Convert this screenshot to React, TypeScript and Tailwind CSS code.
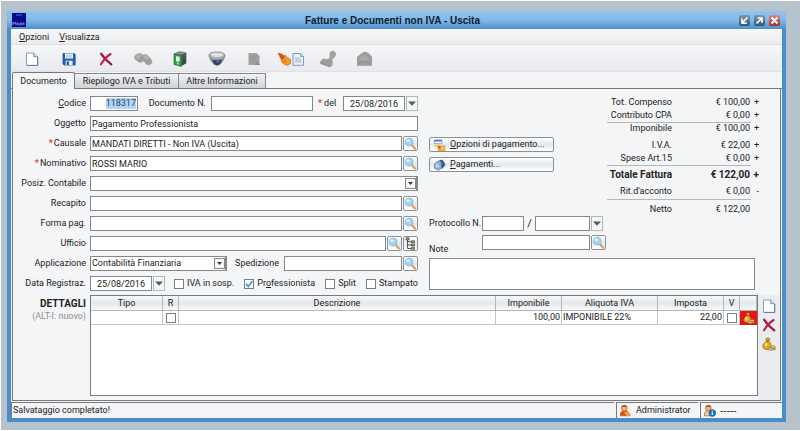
import React from 'react';

interface IconProps {
  className?: string;
}

const inputClass = 'h-[15px] min-w-0 border border-[#85888b] bg-white px-px text-[#222] outline-none';
const buttonClass =
  'flex h-[15px] items-center rounded-xs border border-[#8d9093] bg-linear-to-b from-white via-[#e4e8ee] to-white';

/* ---------- Icons ---------- */

const PageIcon = ({ className = 'size-[14px]' }: IconProps) => (
  <svg viewBox="0 0 14 14" className={className}>
    <path d="M1.5 1h7.3l3.7 3.7V13.3h-11z" fill="#fff" stroke="#7d97b4" strokeWidth="0.9" />
    <path d="M8.8 1v3.7h3.7" fill="#dbe8f5" stroke="#6384a6" strokeWidth="0.9" />
    <path d="M12.8 5v8.6H2" fill="none" stroke="#4d6d94" strokeWidth="0.8" />
  </svg>
);

const SaveIcon = ({ className = 'size-[14px]' }: IconProps) => (
  <svg viewBox="0 0 14 14" className={className}>
    <path d="M1 1.5h11.2l1 1V13H2l-1-1z" fill="#1f62b5" stroke="#174a8d" strokeWidth="0.7" />
    <path d="M3 1.5h8v5H3z" fill="#f1f7fd" />
    <path d="M4 3.2h6M4 4.9h6" stroke="#93add0" strokeWidth="0.8" />
    <path d="M3.6 8.7h7V13h-7z" fill="#e6eef6" />
    <path d="M4.8 9.5h2V13h-2z" fill="#174a8d" />
  </svg>
);

const DeleteIcon = ({ className = 'size-[14px]' }: IconProps) => (
  <svg viewBox="0 0 14 14" className={className}>
    <path d="M2.2 1.8C4 4.6 8.4 9.4 12.3 12.4" stroke="#a31436" strokeWidth="2.3" strokeLinecap="round" fill="none" />
    <path d="M11.6 2C8.2 4 4.3 8.5 2 12.3" stroke="#bd2348" strokeWidth="2.1" strokeLinecap="round" fill="none" />
  </svg>
);

const BinocularsIcon = () => (
  <svg viewBox="0 0 20 14" className="h-[14px] w-5">
    <path d="M1 4.5 3 2.2 6.5 1l4.2 1.7L13 2l4 3.5 2.5 3.8-.5 2.2-2.8 1.7-3-.8-2.4-3.2-2.6 1.6-2.7-.5L1.6 7z" fill="#a3a3a3" />
    <path d="M2 4.5c2-2 4.5-2.2 6.5-1l-3 3.4zM10.5 4.2l2.5-1 3 3-2.5 1.5z" fill="#b4b4b4" />
    <path d="m5.5 9.5 4.2-4.3M12.8 11.5l4-3.6" stroke="#8b8b8b" strokeWidth="1" fill="none" />
  </svg>
);

const BinderIcon = () => (
  <svg viewBox="0 0 14 16" className="h-4 w-[14px]">
    <path d="M1 3 6.5.6 13.2 2 8.6 4.3z" fill="#8f9592" stroke="#4d554f" strokeWidth="0.6" />
    <path d="m8.3 4 5-2v10.3l-5 3z" fill="#414a44" />
    <path d="m9.8 5 2.5-1M9.8 7l2.5-1" stroke="#78817b" strokeWidth="0.7" />
    <path d="m1 3 7.3 1.2v11.2L1 13.5z" fill="#31a046" stroke="#1e6a30" strokeWidth="0.7" />
    <path d="m3 5.2 3.6.6v5l-3.6-.6z" fill="#e6f6e6" />
    <circle cx="4.8" cy="12.5" r="0.9" fill="#cdebcf" />
  </svg>
);

const CameraIcon = () => (
  <svg viewBox="0 0 18 16" className="h-4 w-[18px]">
    <path d="M1 5.5h16l-1.3 3.7-3 4c-2 1.8-5.4 1.8-7.4 0l-3-4z" fill="#8b8e92" />
    <path d="M4.5 8.5h9.3c-.2 3-2.3 5.8-4.6 5.8s-4.5-2.8-4.7-5.8z" fill="#35404f" />
    <path d="M.9 4.5C1.5 1.7 4.5 1 9 1s7.5.7 8.1 3.5c-.2 3-3.5 4.5-8.1 4.5S1.1 7.5.9 4.5z" fill="#a9acb0" stroke="#7a7d81" strokeWidth="0.7" />
    <path d="M2.5 3.8C3.5 2 6 1.8 9 1.8s5.5.2 6.5 2c-1 1.7-3.5 2.3-6.5 2.3s-5.500-.6-6.500-2.300z" fill="#dedfe1" />
    <circle cx="10.2" cy="10.8" r="2" fill="#2c4a94" />
    <circle cx="9.7" cy="10.3" r="0.8" fill="#93b0e3" />
  </svg>
);

const DisabledPageIcon = () => (
  <svg viewBox="0 0 14 14" className="size-[14px]">
    <path d="M1.5 1h8L12.5 4v9h-11z" fill="#a0a0a0" />
    <path d="M3.5 4.5h4M3.5 6.7h6M3.5 9h4" stroke="#949494" strokeWidth="0.9" />
    <path d="m9.5 9.5 3.5 3.5H8z" fill="#8d8d8d" />
  </svg>
);

const HandPageIcon = () => (
  <svg viewBox="0 0 28 14" className="h-[14px] w-7">
    <path d="m1.2 1.2 3.8 1 2.5 2.5L8 2.8l1.8 2.4 3.7 2.3v4L10.8 13.3 6.5 12l-1.8-2.3L4 7z" fill="#f39a2c" stroke="#c9601a" strokeWidth="0.7" />
    <path d="m1.2 1.2 3.8 1 2.8 3L5 8z" fill="#c8501c" />
    <path d="m7 7.5 2.5 2M6.3 9.2l2.5 1.6" stroke="#c9601a" strokeWidth="0.7" />
    <path d="M16 1.5h7.5L26.5 4.5v8.8H16z" fill="#eef4fc" stroke="#6f8dbb" strokeWidth="0.9" />
    <path d="M23.5 1.5v3h3" fill="#bfd2ea" stroke="#5f82b5" strokeWidth="0.7" />
    <path d="M18 6h5M18 8h6.5M18 10h6.5" stroke="#8aa6cf" strokeWidth="0.9" />
  </svg>
);

const StampIcon = () => (
  <svg viewBox="0 0 18 18" className="size-[18px]">
    <path d="M10.5 4C10.5 2 12 .8 13.8.8s3.2 1.3 3.2 3.2-1 3-2.4 4.2c-1.2 1-1.7 2-1.4 3.5l-3.700-2.200c1.800-2 1-3.500 1-5.500z" fill="#a3a3a3" />
    <path d="M1 12.3c0-1 2.5-3.5 4-3.8l2.5.8 2-.8 4 2.3.2 3.5c-.4 1.5-1.6 2.8-3 2.9L1.5 14z" fill="#9d9d9d" />
    <path d="m1.5 13 9.2 3.3" stroke="#8a8a8a" strokeWidth="0.9" />
  </svg>
);

const MailIcon = () => (
  <svg viewBox="0 0 17 16" className="h-4 w-[17px]">
    <path d="M1 6 5.5 2.2 8 .8h2l3 1.7L16 6v8.7H1z" fill="#9d9d9d" />
    <path d="m3.5 7 4-3 5.5 3.5v2l-5 1.5-4.5-2z" fill="#aaa" />
    <path d="m1.5 14 5.5-4 2 1.3L11 10l4.5 4" fill="none" stroke="#8b8b8b" strokeWidth="0.8" />
  </svg>
);

const SearchIcon = () => (
  <svg viewBox="0 0 13 13" className="size-[13px]">
    <path d="m7.8 8 3.2 3.5" stroke="#e2a064" strokeWidth="2.4" strokeLinecap="round" />
    <circle cx="5.2" cy="5" r="3.9" fill="#a5d4f2" stroke="#7fb9df" strokeWidth="0.8" />
    <ellipse cx="4" cy="3.7" rx="1.8" ry="1.3" fill="#e4f4fd" />
  </svg>
);

const TreeIcon = () => (
  <svg viewBox="0 0 13 13" className="size-[13px]">
    <path d="M3.5 2v9.5h4M3.5 4.7h4M3.5 8h4" stroke="#444" strokeWidth="0.9" fill="none" />
    <path d="M2 .8h3v2.2H2zM7.5 3.8h3v1.9h-3zM7.5 7.1h3V9h-3zM7.5 10.4h3v1.9h-3z" fill="#a3a97f" stroke="#3c4230" strokeWidth="0.7" />
  </svg>
);

const OptionsIcon = () => (
  <svg viewBox="0 0 13 13" className="h-3 w-[13px]">
    <path d="M1 1h8v4H1z" fill="#fff" stroke="#5b86c2" strokeWidth="0.7" />
    <path d="M1 1h8v1.7H1z" fill="#477bc0" />
    <path d="M1 6h6v2.5H1z" fill="#f7d154" />
    <path d="M5 7.5h7.5v5H5z" fill="#f8c23f" stroke="#c98a25" strokeWidth="0.7" />
    <path d="m4.5 9 3-2v4z" fill="#d64c26" />
  </svg>
);

const PaymentsIcon = () => (
  <svg viewBox="0 0 13 13" className="h-3 w-[13px]">
    <path d="M1 5.5 5.5 2l3 1.5V10l-3 2.3L1 10z" fill="#8eb2d6" stroke="#446f9f" strokeWidth="0.7" />
    <path d="M6 1.2 9.5.8l1.7 2L13 6.5 10.5 9.5 8.5 11V4z" fill="#3d618c" />
    <path d="m2.5 6.5 2.5-.7M2.5 8.5l3.5-.7" stroke="#eef6fc" strokeWidth="1" />
  </svg>
);

const CoinsIcon = ({ className = 'size-[14px]' }: IconProps) => (
  <svg viewBox="0 0 14 14" className={className}>
    <path d="M4 1.5 6.5 1 8 2.2 6.7 4.2C9 6 9.5 8 8.8 11L6 12.7 2 11.8.8 9.5C1 7 2.4 5.5 4.6 4z" fill="#e3ab24" stroke="#89610f" strokeWidth="0.7" />
    <path d="M4.5 4.2h2.3" stroke="#724f0e" strokeWidth="0.9" />
    <ellipse cx="4" cy="7.5" rx="1.2" ry="1.7" fill="#fbe48c" />
    <ellipse cx="10.8" cy="10" rx="2.6" ry="1.3" fill="#f2d367" stroke="#89610f" strokeWidth="0.6" />
    <ellipse cx="8.5" cy="12.2" rx="2.4" ry="1.2" fill="#d3d0bc" stroke="#77694c" strokeWidth="0.6" />
    <ellipse cx="12" cy="12" rx="1.6" ry="1" fill="#d9b53f" stroke="#89610f" strokeWidth="0.5" />
  </svg>
);

const UserIcon = ({ info = false }: { info?: boolean }) => (
  <svg viewBox="0 0 13 13" className="size-[13px]">
    <path d="M1.5 11.8c-.6-2.8.8-4.9 3.7-5.1 3.2-.2 5.3 1.9 6 5.1z" fill={info ? '#ead0ad' : '#dd4d21'} stroke="#b0562a" strokeWidth="0.7" />
    <circle cx="5.3" cy="4" r="2.9" fill="#f3b467" stroke="#a9682f" strokeWidth="0.7" />
    <path d="M2.7 3.3C3.2.7 7.4.6 8 3.1 6 3.3 5 2.5 2.7 3.3z" fill="#a65f27" />
    {info ? (
      <>
        <circle cx="9.3" cy="9" r="3.4" fill="#2277c9" stroke="#0d4a93" strokeWidth="0.5" />
        <path d="M9.3 8.3v2.7M9.3 6.5v1" stroke="#fff" strokeWidth="1.1" />
      </>
    ) : (
      <path d="m5 8 2.5 3.8h4.2c0-1.8-1-3-3-4z" fill="#f5a64b" />
    )}
  </svg>
);

const Chevron = () => (
  <svg viewBox="0 0 8 5" className="h-[5px] w-2">
    <path d="M0 .5h8L4 4.8z" fill="#555a5a" />
  </svg>
);

/* ---------- Controls ---------- */

const SearchButton = ({ label }: { label: string }) => (
  <button type="button" aria-label={label} className={`${buttonClass} w-[15px] shrink-0`}>
    <SearchIcon />
  </button>
);

const DropButton = ({ label }: { label: string }) => (
  <button type="button" aria-label={label} className="flex h-[15px] w-3 shrink-0 items-center justify-center border border-[#b4b7ba] bg-[#f5f6f8]">
    <Chevron />
  </button>
);

interface SelectFieldProps {
  id: string;
  options: string[];
  className?: string;
}

const SelectField = ({ id, options, className = '' }: SelectFieldProps) => (
  <div className={`relative flex ${className}`}>
    <select id={id} className={`${inputClass} w-full appearance-none border-r-2`}>
      {options.map((option) => (
        <option key={option}>{option}</option>
      ))}
    </select>
    <span className="pointer-events-none absolute top-[2px] right-[2px] flex h-[11px] w-[11px] items-center justify-center border border-[#85888b] bg-[#f5f6f8]">
      <svg viewBox="0 0 8 5" className="h-[3px] w-[5px]">
        <path d="M0 0h8L4 5z" fill="#333" />
      </svg>
    </span>
  </div>
);

interface CheckFieldProps {
  label: React.ReactNode;
  checked?: boolean;
}

const CheckField = ({ label, checked = false }: CheckFieldProps) => (
  <label className="flex items-center gap-[3px] whitespace-nowrap">
    <span className="relative flex">
      <input type="checkbox" defaultChecked={checked} className="peer size-[10px] appearance-none border border-[#7b7e81] bg-white" />
      <svg viewBox="0 0 10 10" className="pointer-events-none absolute inset-0 hidden size-[10px] peer-checked:block">
        <path d="m2 4.8 2.3 2.7L8.4 2" stroke="#4a9bda" strokeWidth="1.8" fill="none" />
      </svg>
    </span>
    {label}
  </label>
);

interface FormRowProps {
  id: string;
  label: React.ReactNode;
  required?: boolean;
  children: React.ReactNode;
}

const FormRow = ({ id, label, required = false, children }: FormRowProps) => (
  <div className="flex items-center gap-1">
    <label htmlFor={id} className="w-[73px] shrink-0 text-right whitespace-nowrap">
      {required && <span className="mr-px font-bold text-[#e33]">*</span>}
      {label}
    </label>
    <div className="flex min-w-0 flex-1 items-center gap-px">{children}</div>
  </div>
);

const toolbar = [
  { name: 'Nuovo', icon: <PageIcon /> },
  { name: 'Salva', icon: <SaveIcon /> },
  { name: 'Elimina', icon: <DeleteIcon /> },
  { name: 'Cerca', icon: <BinocularsIcon /> },
  { name: 'Archivio', icon: <BinderIcon /> },
  { name: 'Anteprima', icon: <CameraIcon /> },
  { name: 'Documento', icon: <DisabledPageIcon /> },
  { name: 'Seleziona', icon: <HandPageIcon /> },
  { name: 'Timbro', icon: <StampIcon /> },
  { name: 'Invia', icon: <MailIcon /> }
];

const totals = [
  { label: 'Tot. Compenso', value: '€ 100,00', sign: '+', style: 'h-[13px]' },
  { label: 'Contributo CPA', value: '€ 0,00', sign: '+', style: 'h-[13px]' },
  { label: 'Imponibile', value: '€ 100,00', sign: '+', style: 'h-[13px]', line: true },
  { label: 'I.V.A.', value: '€ 22,00', sign: '+', style: 'mt-1 h-[13px]' },
  { label: 'Spese Art.15', value: '€ 0,00', sign: '+', style: 'h-[13px]' },
  { label: 'Totale Fattura', value: '€ 122,00', sign: '+', style: 'h-[18px] text-[10px] font-bold', line: true },
  { label: "Rit.d'acconto", value: '€ 0,00', sign: '-', style: 'h-4' },
  { label: 'Netto', value: '€ 122,00', sign: '', style: 'h-5', line: true }
];

const Titlebar = () => (
  <header className="flex h-[18px] items-center rounded-t-sm bg-linear-to-b from-[#8fc5f3] via-[#83b9e8] to-[#4d8fcc] pr-[6px] pl-[5px]">
    <span className="flex size-[14px] items-end justify-center bg-[#08088c]">
      <svg viewBox="0 0 14 14" className="size-[14px]">
        <path d="M4 2h6" stroke="#7183cf" strokeWidth="0.8" />
        <path d="M1 12V9l1.5 2L4 9v3M5 12l1-2 1 2M8 13v-3h1.5v2M11 12v-2h1v2" stroke="#a9b5ef" strokeWidth="0.7" fill="none" />
      </svg>
    </span>
    <h1 className="flex-1 pl-5 text-center font-['Liberation_Sans',sans-serif] text-[10px] font-bold text-[#0b1b2c]">
      Fatture e Documenti non IVA - Uscita
    </h1>
    <div className="flex gap-1">
      <button type="button" aria-label="Riduci" className="size-[11px] rounded-xs bg-linear-to-b from-[#8199ad] to-[#2d5674]">
        <svg viewBox="0 0 11 11"><path d="M8.5 2.5 3.5 7.5M3 3.5v4.7h4.7" stroke="#fff" strokeWidth="1.7" fill="none" /></svg>
      </button>
      <button type="button" aria-label="Ingrandisci" className="size-[11px] rounded-xs bg-linear-to-b from-[#8199ad] to-[#2d5674]">
        <svg viewBox="0 0 11 11"><path d="m2.5 8.5 5-5M3.5 3H8v4.7" stroke="#fff" strokeWidth="1.7" fill="none" /></svg>
      </button>
      <button type="button" aria-label="Chiudi" className="size-[11px] rounded-xs bg-linear-to-b from-[#d98a83] to-[#a32c26]">
        <svg viewBox="0 0 11 11"><path d="m2.5 2.5 6 6m0-6-6 6" stroke="#fff" strokeWidth="1.8" /></svg>
      </button>
    </div>
  </header>
);

const DocumentForm = () => (
  <form className="flex w-[405px] shrink-0 flex-col gap-[5px]">
    <FormRow id="codice" label={<><u>C</u>odice</>}>
      <div className={`${inputClass} flex w-12 items-center justify-end`}>
        <input id="codice" defaultValue="118317" className="field-sizing-content h-[11px] bg-[#b3d5f2] text-right text-[#17466f] outline-none" />
      </div>
      <label htmlFor="numero" className="flex-1 pr-1 text-right whitespace-nowrap">Documento N.</label>
      <input id="numero" className={`${inputClass} w-[102px]`} />
      <label htmlFor="data" className="w-7 pl-1 whitespace-nowrap">
        <span className="mr-[2px] font-bold text-[#e33]">*</span>del
      </label>
      <input id="data" defaultValue="25/08/2016" className={`${inputClass} w-[62px] text-center`} />
      <DropButton label="Scegli data" />
    </FormRow>
    <FormRow id="oggetto" label="Oggetto">
      <input id="oggetto" defaultValue="Pagamento Professionista" className={`${inputClass} flex-1`} />
    </FormRow>
    <FormRow id="causale" label="Causale" required>
      <input id="causale" defaultValue="MANDATI DIRETTI - Non IVA (Uscita)" className={`${inputClass} flex-1`} />
      <SearchButton label="Cerca causale" />
    </FormRow>
    <FormRow id="nominativo" label="Nominativo" required>
      <input id="nominativo" defaultValue="ROSSI MARIO" className={`${inputClass} flex-1`} />
      <SearchButton label="Cerca nominativo" />
    </FormRow>
    <FormRow id="posizione" label="Posiz. Contabile">
      <SelectField id="posizione" options={['']} className="flex-1" />
    </FormRow>
    <FormRow id="recapito" label="Recapito">
      <input id="recapito" className={`${inputClass} flex-1`} />
      <SearchButton label="Cerca recapito" />
    </FormRow>
    <FormRow id="forma" label="Forma pag.">
      <input id="forma" className={`${inputClass} flex-1`} />
      <SearchButton label="Cerca forma di pagamento" />
    </FormRow>
    <FormRow id="ufficio" label="Ufficio">
      <input id="ufficio" className={`${inputClass} flex-1`} />
      <SearchButton label="Cerca ufficio" />
      <button type="button" aria-label="Albero uffici" className={`${buttonClass} w-[15px] shrink-0`}>
        <TreeIcon />
      </button>
    </FormRow>
    <FormRow id="applicazione" label="Applicazione">
      <SelectField id="applicazione" options={['Contabilità Finanziaria']} className="w-[137px]" />
      <label htmlFor="spedizione" className="flex-1 pr-1 text-right">Spedizione</label>
      <input id="spedizione" className={`${inputClass} w-[118px]`} />
      <SearchButton label="Cerca spedizione" />
    </FormRow>
    <FormRow id="registrazione" label="Data Registraz.">
      <input id="registrazione" defaultValue="25/08/2016" className={`${inputClass} w-[62px] text-center`} />
      <DropButton label="Scegli data di registrazione" />
      <div className="flex flex-1 justify-between pl-2">
        <CheckField label="IVA in sosp." />
        <CheckField label={<span>Pr<u>o</u>fessionista</span>} checked />
        <CheckField label="Split" />
        <CheckField label="Stampato" />
      </div>
    </FormRow>
  </form>
);

const PaymentPanel = () => (
  <section className="flex min-w-0 flex-1 flex-col">
    <div className="flex h-[120px] justify-between">
      <div className="flex flex-col gap-[5px] pt-[41px]">
        <button type="button" className={`${buttonClass} w-[125px] gap-1 pl-[3px] whitespace-nowrap`}>
          <OptionsIcon />
          <span><u>O</u>pzioni di pagamento...</span>
        </button>
        <button type="button" className={`${buttonClass} w-[125px] gap-1 pl-[3px] whitespace-nowrap`}>
          <PaymentsIcon />
          <span><u>P</u>agamenti...</span>
        </button>
      </div>
      <dl className="w-[156px]">
        {totals.map((row) => (
          <div key={row.label} className={`relative flex items-center ${row.style}`}>
            {row.line && <span className="absolute top-0 right-2 left-1 h-px bg-[#b5b8bb]" />}
            <dt className="w-[69px] text-right whitespace-nowrap">{row.label}</dt>
            <dd className="flex-1 text-right">{row.value}</dd>
            <dd className="w-[9px] text-right">{row.sign}</dd>
          </div>
        ))}
      </dl>
    </div>
    <div className="flex items-center">
      <label htmlFor="protocollo" className="w-[53px] whitespace-nowrap">Protocollo N.</label>
      <input id="protocollo" className={`${inputClass} w-[42px]`} />
      <span className="w-[11px] text-center text-[11px]">/</span>
      <input aria-label="Anno protocollo" className={`${inputClass} mr-px w-[55px]`} />
      <DropButton label="Scegli protocollo" />
    </div>
    <div className="mt-1 flex">
      <label htmlFor="note" className="w-[53px] pt-2">Note</label>
      <input aria-label="Codice nota" className={`${inputClass} mr-px w-[108px]`} />
      <SearchButton label="Cerca nota" />
    </div>
    <textarea id="note" className="mt-[2px] mr-1 h-8 resize-none border border-[#85888b] bg-white px-px outline-none" />
  </section>
);

const headCell = 'h-[15px] border-r border-b border-[#b3b7bb] bg-linear-to-b from-[#f8f9fa] via-[#e3e8ec] to-[#f8f9fa] font-normal';
const bodyCell = 'h-[14px] border-r border-b border-[#c3c6c9]';

const DetailsTable = () => (
  <div className="min-w-0 flex-1 border border-[#77797c] bg-white">
    <table className="w-full table-fixed border-separate border-spacing-0 whitespace-nowrap">
      <colgroup>
        <col className="w-[72px]" />
        <col className="w-4" />
        <col />
        <col className="w-[66px]" />
        <col className="w-24" />
        <col className="w-[66px]" />
        <col className="w-4" />
        <col className="w-[17px]" />
      </colgroup>
      <thead>
        <tr>
          {['Tipo', 'R', 'Descrizione', 'Imponibile', 'Aliquota IVA', 'Imposta', 'V', ''].map((title) => (
            <th key={title} className={headCell}>{title}</th>
          ))}
        </tr>
      </thead>
      <tbody>
        <tr>
          <td className={bodyCell} />
          <td className={bodyCell}>
            <input type="checkbox" aria-label="R" className="mx-auto block size-[10px] appearance-none border border-[#7b7e81]" />
          </td>
          <td className={bodyCell} />
          <td className={`${bodyCell} pr-px text-right`}>100,00</td>
          <td className={`${bodyCell} pl-px`}>IMPONIBILE 22%</td>
          <td className={`${bodyCell} pr-px text-right`}>22,00</td>
          <td className={bodyCell}>
            <input type="checkbox" aria-label="V" className="mx-auto block size-[10px] appearance-none border border-[#7b7e81]" />
          </td>
          <td className="bg-[#ee1111]"><CoinsIcon className="mx-auto size-3" /></td>
        </tr>
      </tbody>
    </table>
  </div>
);

const App: React.FC = () => {
  return (
    <div className="flex min-h-screen flex-col border-t border-b border-l border-white bg-[#b7c3cc] pt-[10px] pr-[14px] pb-2 pl-[6px] font-['Roboto','Liberation_Sans',sans-serif] text-[9px] leading-[13px] text-[#222]">
      <div className="flex flex-1 flex-col rounded-t-sm bg-[#4b8dcb] pb-1">
        <Titlebar />
        <div className="mx-1 flex flex-1 flex-col bg-[#f4f5f7]">
          {/* Menu */}
          <nav className="flex h-4 items-center gap-[10px] border-b border-[#dddfe2] bg-linear-to-b from-[#f8f8fa] to-[#eaecee] px-2 pt-[2px]">
            <a href="#opzioni"><u>O</u>pzioni</a>
            <a href="#visualizza"><u>V</u>isualizza</a>
          </nav>

          {/* Toolbar */}
          <div className="flex h-[27px] items-center border-b border-[#e0e2e5] bg-linear-to-b from-[#f5f6f8] to-[#e8eaed] pt-px pl-[2px]">
            {toolbar.map((item) => (
              <button key={item.name} type="button" aria-label={item.name} className="flex w-[37px] justify-center">
                {item.icon}
              </button>
            ))}
          </div>

          {/* Tabs */}
          <div role="tablist" className="flex h-[17px] items-end border-b border-[#77797c] pl-px">
            <button type="button" role="tab" aria-selected="true" className="-mb-px h-[17px] w-[63px] rounded-t-xs border border-b-0 border-[#77797c] bg-[#f4f5f7]">
              Documento
            </button>
            <button type="button" role="tab" aria-selected="false" className="h-[15px] w-[104px] border border-b-0 border-l-0 border-[#85888b] bg-linear-to-b from-[#f1f2f4] to-[#d0d3d8]">
              Riepilogo IVA e Tributi
            </button>
            <button type="button" role="tab" aria-selected="false" className="h-[15px] w-[87px] border border-b-0 border-l-0 border-[#85888b] bg-linear-to-b from-[#f1f2f4] to-[#d0d3d8]">
              Altre Informazioni
            </button>
          </div>

          <main className="mx-px flex flex-1 flex-col border-r border-b border-l border-[#77797c]">
            <div className="flex gap-[11px] pt-[7px] pr-[21px]">
              <DocumentForm />
              <PaymentPanel />
            </div>
            <div className="mt-1 flex flex-1">
              <div className="w-[73px] shrink-0 pt-[2px] text-right">
                <h2 className="text-[10px] font-bold">DETTAGLI</h2>
                <p className="text-[#8d8f92]">(ALT-I: nuovo)</p>
              </div>
              <div className="mb-1 ml-1 flex min-w-0 flex-1">
                <DetailsTable />
              </div>
              <div className="flex w-[22px] flex-col items-center gap-[5px] bg-[#eaecef] pt-1">
                <button type="button" aria-label="Nuova riga"><PageIcon /></button>
                <button type="button" aria-label="Elimina riga"><DeleteIcon /></button>
                <button type="button" aria-label="Importi riga"><CoinsIcon /></button>
              </div>
            </div>
          </main>

          {/* Status bar */}
          <footer className="mt-px flex h-4 gap-[2px]">
            <p className="flex flex-1 items-center border-t border-l border-[#77797c] pl-px">Salvataggio completato!</p>
            <p className="flex w-[82px] items-center gap-1 border-t border-l border-[#77797c] pl-[2px]">
              <UserIcon />
              Administrator
            </p>
            <p className="flex w-[82px] items-center gap-1 border-t border-l border-[#77797c] pl-[2px]">
              <UserIcon info />
              <span className="font-['Liberation_Sans',sans-serif] text-[10px]">-----</span>
            </p>
          </footer>
        </div>
      </div>
    </div>
  );
};

export default App;
